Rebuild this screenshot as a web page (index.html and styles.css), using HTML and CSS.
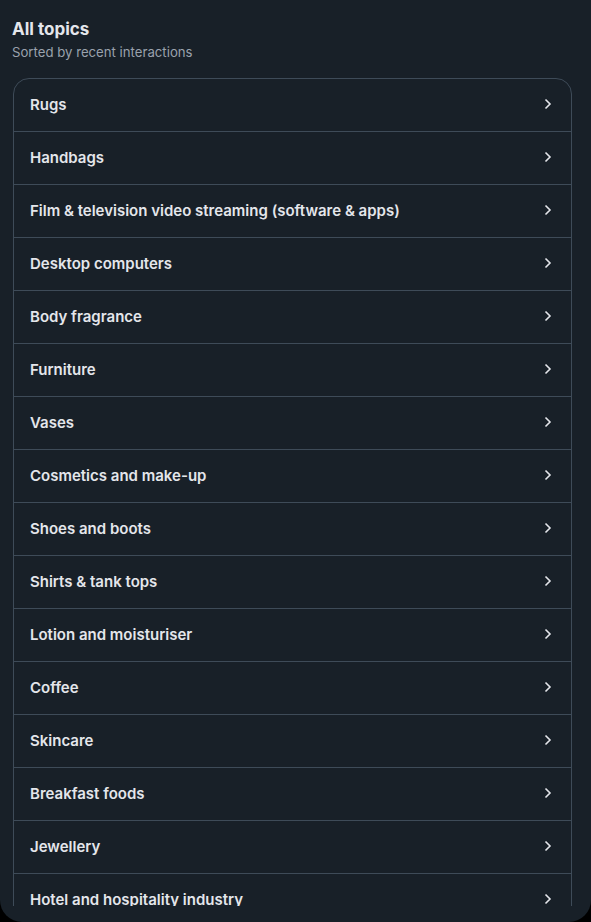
FILE: index.html
```html
<!DOCTYPE html>
<html>
<head>
<meta charset="utf-8">
<link rel="stylesheet" href="styles.css">
</head>
<body>
<div class="page">
  <header class="head">
    <h1 class="title">All topics</h1>
    <p class="sub">Sorted by recent interactions</p>
  </header>
  <div class="scroll">
    <ul class="card">
      <li class="row"><span>Rugs</span><svg class="chev" viewBox="0 0 8 12"><path d="M1.5 1.5 6 6l-4.5 4.5"/></svg></li>
      <li class="row"><span>Handbags</span><svg class="chev" viewBox="0 0 8 12"><path d="M1.5 1.5 6 6l-4.5 4.5"/></svg></li>
      <li class="row"><span>Film &amp; television video streaming (software &amp; apps)</span><svg class="chev" viewBox="0 0 8 12"><path d="M1.5 1.5 6 6l-4.5 4.5"/></svg></li>
      <li class="row"><span>Desktop computers</span><svg class="chev" viewBox="0 0 8 12"><path d="M1.5 1.5 6 6l-4.5 4.5"/></svg></li>
      <li class="row"><span>Body fragrance</span><svg class="chev" viewBox="0 0 8 12"><path d="M1.5 1.5 6 6l-4.5 4.5"/></svg></li>
      <li class="row"><span>Furniture</span><svg class="chev" viewBox="0 0 8 12"><path d="M1.5 1.5 6 6l-4.5 4.5"/></svg></li>
      <li class="row"><span>Vases</span><svg class="chev" viewBox="0 0 8 12"><path d="M1.5 1.5 6 6l-4.5 4.5"/></svg></li>
      <li class="row"><span>Cosmetics and make-up</span><svg class="chev" viewBox="0 0 8 12"><path d="M1.5 1.5 6 6l-4.5 4.5"/></svg></li>
      <li class="row"><span>Shoes and boots</span><svg class="chev" viewBox="0 0 8 12"><path d="M1.5 1.5 6 6l-4.5 4.5"/></svg></li>
      <li class="row"><span>Shirts &amp; tank tops</span><svg class="chev" viewBox="0 0 8 12"><path d="M1.5 1.5 6 6l-4.5 4.5"/></svg></li>
      <li class="row"><span>Lotion and moisturiser</span><svg class="chev" viewBox="0 0 8 12"><path d="M1.5 1.5 6 6l-4.5 4.5"/></svg></li>
      <li class="row"><span>Coffee</span><svg class="chev" viewBox="0 0 8 12"><path d="M1.5 1.5 6 6l-4.5 4.5"/></svg></li>
      <li class="row"><span>Skincare</span><svg class="chev" viewBox="0 0 8 12"><path d="M1.5 1.5 6 6l-4.5 4.5"/></svg></li>
      <li class="row"><span>Breakfast foods</span><svg class="chev" viewBox="0 0 8 12"><path d="M1.5 1.5 6 6l-4.5 4.5"/></svg></li>
      <li class="row"><span>Jewellery</span><svg class="chev" viewBox="0 0 8 12"><path d="M1.5 1.5 6 6l-4.5 4.5"/></svg></li>
      <li class="row"><span>Hotel and hospitality industry</span><svg class="chev" viewBox="0 0 8 12"><path d="M1.5 1.5 6 6l-4.5 4.5"/></svg></li>
    </ul>
  </div>
</div>
</body>
</html>
```
FILE: styles.css
```css
* { box-sizing: border-box; }
html, body { margin: 0; padding: 0; background: #000; }
body { font-family: Inter, "Noto Sans", "Liberation Sans", sans-serif; }
.page {
  width: 591px;
  height: 922px;
  background: #182028;
  border-radius: 0 0 22px 22px;
  display: flex;
  flex-direction: column;
  padding: 17px 19px 16px 13px;
  overflow: hidden;
}
.head { margin-left: -1px; }
.title {
  margin: 0;
  font-size: 17px;
  line-height: 24px;
  font-weight: 700;
  color: #e4e6eb;
}
.sub {
  margin: 2px 0 0;
  font-size: 13.2px;
  line-height: 18px;
  color: #9aa2ad;
}
.scroll {
  margin-top: 17px;
  flex: 1;
  min-height: 0;
  overflow: hidden;
}
.card {
  list-style: none;
  margin: 0;
  padding: 0;
  border: 1px solid #3e4b58;
  border-radius: 16px 16px 0 0;
}
.row {
  height: 53px;
  display: flex;
  align-items: center;
  justify-content: space-between;
  padding: 0 16px 2px;
  border-top: 1px solid #3e4b58;
  color: #e4e6eb;
  font-size: 15px;
  font-weight: 600;
}
.row:first-child { border-top: none; height: 52px; }
.chev {
  width: 8px;
  height: 12px;
  fill: none;
  stroke: #e4e6eb;
  stroke-width: 1.6;
  margin-right: 3px;
}
```
